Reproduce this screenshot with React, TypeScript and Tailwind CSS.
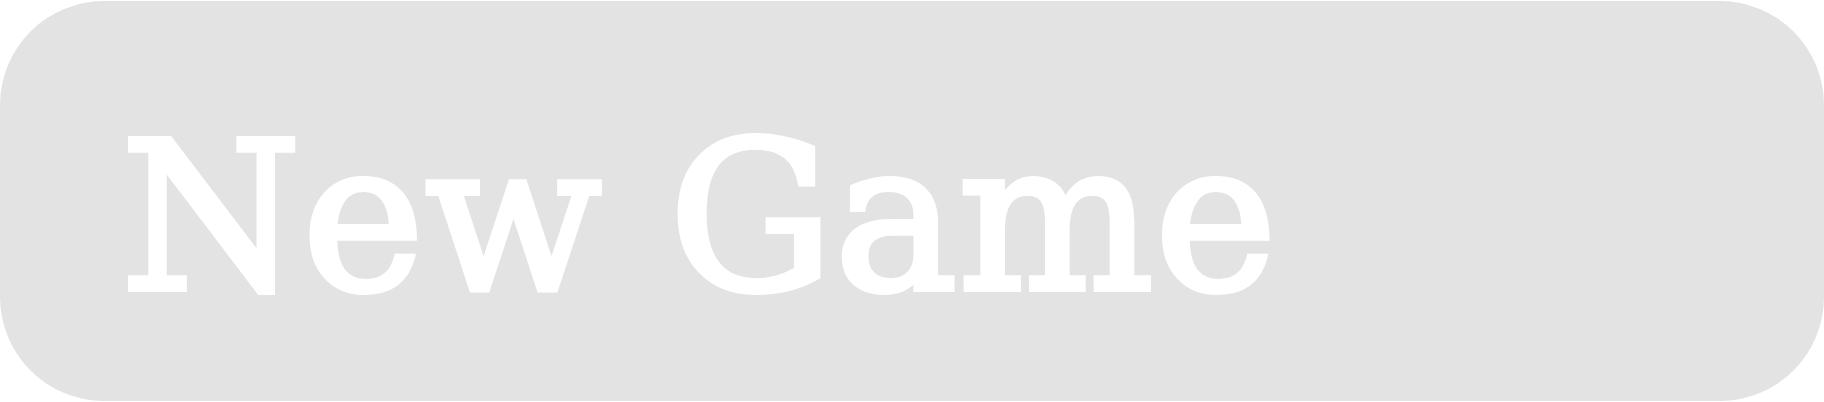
import React from "react";

export default function App() {
  return (
    <div className="w-[1824px] h-[402px] bg-white pt-px">
      <button
        type="button"
        className="flex h-[400px] w-[1824px] items-start rounded-[104px] bg-[#e3e3e3] pl-[121px] pt-[114px] text-white"
        style={{ fontFamily: '"DejaVu Serif", serif' }}
      >
        <span className="text-[206px] font-normal leading-none tracking-[1px] [-webkit-text-stroke:6px_white]">New Game</span>
      </button>
    </div>
  );
}
